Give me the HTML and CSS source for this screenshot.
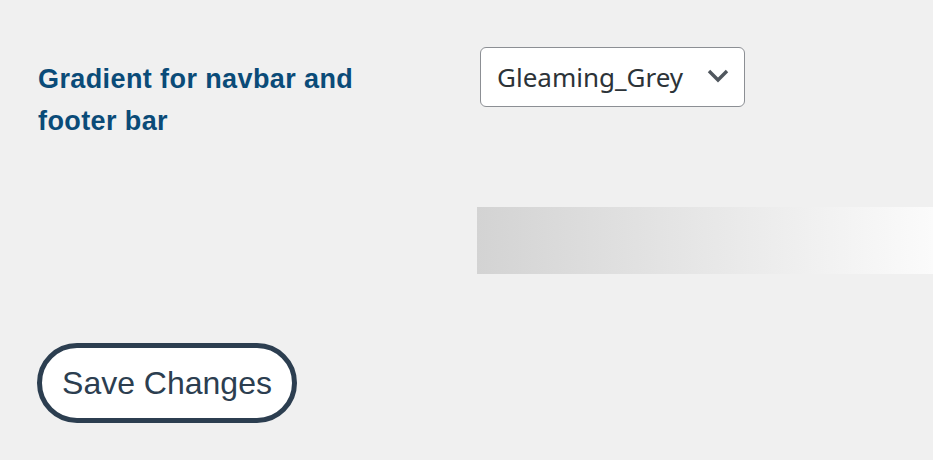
FILE: index.html
```html
<!DOCTYPE html>
<html lang="en">
<head>
  <meta charset="UTF-8">
  <title>Theme Settings</title>
  <link rel="stylesheet" href="styles.css">
</head>
<body>
  <form class="settings">
    <div class="field-row">
      <label class="field-label" for="gradient">Gradient for navbar and footer bar</label>
      <div class="select-wrap">
        <select id="gradient">
          <option>Gleaming_Grey</option>
          <option>Ocean_Blue</option>
          <option>Sunset_Orange</option>
        </select>
        <svg class="chevron" width="22" height="14" viewBox="0 0 22 14">
          <path d="M2 2 L11 11 L20 2" fill="none" stroke="#50575e" stroke-width="3.4"/>
        </svg>
      </div>
    </div>

    <div class="preview"></div>

    <button type="button" class="save">Save Changes</button>
  </form>
</body>
</html>
```

FILE: styles.css
```css
body {
  background: #f0f0f0;
  margin: 0;
  overflow: hidden;
}

.settings {
  padding: 47px 0 0 38px;
}

.field-row {
  display: grid;
  grid-template-columns: 442px auto;
  align-items: start;
}

.field-label {
  font-family: "Liberation Sans", Arial, sans-serif;
  font-weight: bold;
  font-size: 27px;
  letter-spacing: 0.4px;
  line-height: 42px;
  color: #0a4b78;
  max-width: 340px;
  margin-top: 11px;
}

.select-wrap {
  position: relative;
  width: 265px;
}

.select-wrap select {
  appearance: none;
  width: 265px;
  height: 60px;
  padding: 0 50px 0 16px;
  border: 1px solid #8c8f94;
  border-radius: 6px;
  background: #fff;
  font-family: "Noto Sans", sans-serif;
  font-size: 26px;
  color: #2c3338;
}

.chevron {
  position: absolute;
  right: 16px;
  top: 22px;
  pointer-events: none;
}

.preview {
  margin: 65px 0 0 439px;
  height: 67px;
  background: linear-gradient(to right, #d3d3d3, #fbfbfb);
}

.save {
  margin: 69px 0 0 -1px;
  width: 260px;
  height: 80px;
  border: 5px solid #2c3e50;
  border-radius: 40px;
  background: #fff;
  color: #2c3e50;
  font-family: "Liberation Sans", Arial, sans-serif;
  font-size: 32px;
  cursor: pointer;
}
```
